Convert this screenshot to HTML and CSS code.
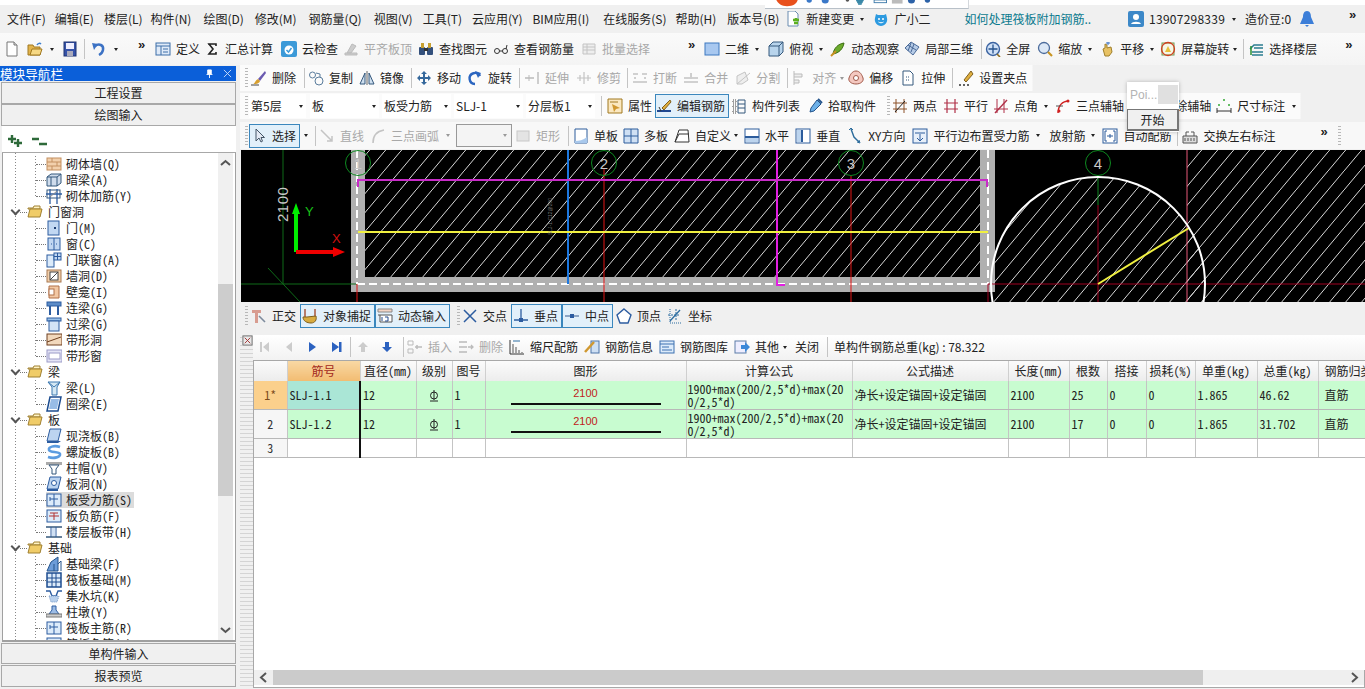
FILE: index.html
```html
<!DOCTYPE html>
<html lang="zh-CN">
<head>
<meta charset="utf-8">
<title>钢筋算量</title>
<link rel="stylesheet" href="styles.css">
</head>
<body>
<svg class="defs" xmlns="http://www.w3.org/2000/svg">
<defs>
<pattern id="hatch" width="16" height="19" patternUnits="userSpaceOnUse"><path d="M-4 23.750L20 -4.750" stroke="#d8d8d8" stroke-width="1" fill="none"/></pattern>
<symbol id="doc" viewBox="0 0 16 16"><path d="M3 1h7l3 3v11H3z" fill="#fff" stroke="#777"/><path d="M10 1v3h3" fill="#ddd" stroke="#777"/></symbol>
<symbol id="open" viewBox="0 0 16 16"><path d="M1 4h5l1 2h6v8H1z" fill="#e2b44c" stroke="#a07820"/><path d="M3 14l2-6h10l-2 6z" fill="#f6d884" stroke="#a07820"/><path d="M10 4c1-2 3-2 4-1" stroke="#3c7fd0" fill="none" stroke-width="1.500"/></symbol>
<symbol id="save" viewBox="0 0 16 16"><rect x="2" y="1" width="12" height="14" fill="#3552a8" stroke="#1e3270"/><rect x="4" y="2" width="8" height="6" fill="#eef"/><rect x="5" y="10" width="6" height="5" fill="#aab"/></symbol>
<symbol id="undo" viewBox="0 0 16 16"><path d="M4 5c4-3 9-1 8 4-.5 2.500-2 4-4 5" fill="none" stroke="#3c72c4" stroke-width="2.500"/><path d="M1 2l6 1-4 6z" fill="#3c72c4"/></symbol>
<symbol id="def" viewBox="0 0 16 16"><rect x="1" y="2" width="14" height="12" fill="#dfeaf8" stroke="#3c6ea8"/><path d="M1 5h14M6 5v9M8 8h5M8 11h5" stroke="#3c6ea8"/></symbol>
<symbol id="sigma" viewBox="0 0 16 16"><path d="M4 3h8v2M12 3H5l4 5-4 5h7v-2" fill="none" stroke="#222" stroke-width="1.600"/></symbol>
<symbol id="cloud" viewBox="0 0 16 16"><rect x="0" y="0" width="16" height="16" rx="2" fill="#3c9ad8"/><circle cx="8" cy="9" r="4.500" fill="#fff"/><path d="M5.500 9l2 2 3-4" stroke="#3c9ad8" fill="none" stroke-width="1.500"/></symbol>
<symbol id="align" viewBox="0 0 16 16"><path d="M2 14h12v-2H2zM4 12l5-9 4 2-5 7z" fill="#ccc" stroke="#bbb"/></symbol>
<symbol id="binoc" viewBox="0 0 16 16"><rect x="1" y="6" width="6" height="8" rx="1" fill="#33507c"/><rect x="9" y="6" width="6" height="8" rx="1" fill="#33507c"/><rect x="3" y="2" width="3" height="5" fill="#c8a030"/><rect x="10" y="2" width="3" height="5" fill="#c8a030"/><rect x="6" y="7" width="4" height="3" fill="#333"/></symbol>
<symbol id="glasses" viewBox="0 0 16 16"><circle cx="4" cy="10" r="2.500" fill="none" stroke="#333"/><circle cx="12" cy="10" r="2.500" fill="none" stroke="#333"/><path d="M6.500 10h3M13 8l1-4" stroke="#333"/></symbol>
<symbol id="batch" viewBox="0 0 16 16"><path d="M2 3h12v10H2zM2 6h12M2 9h12M6 3v10" fill="#eee" stroke="#c4c4c4"/></symbol>
<symbol id="d2" viewBox="0 0 16 16"><rect x="1" y="2" width="14" height="12" fill="#a8c8f0" stroke="#3c78c0"/></symbol>
<symbol id="d3" viewBox="0 0 16 16"><path d="M1 5l4-4h10v10l-4 4H1z" fill="#b8d4ec" stroke="#35587c"/><path d="M1 5h10v10M11 5l4-4" fill="none" stroke="#35587c"/></symbol>
<symbol id="orbit" viewBox="0 0 16 16"><path d="M3 13c1-6 5-10 11-11-1 6-5 10-11 11z" fill="#6cab2c" stroke="#3a6c10"/><path d="M1 15l5-5" stroke="#c89020" stroke-width="2"/></symbol>
<symbol id="local3" viewBox="0 0 16 16"><path d="M1 7l6-6 8 5-6 8z" fill="#b6cbe6" stroke="#4a6a98"/><path d="M4 4l8 5M7 2l-3 8M10 3l-3 8" stroke="#4a6a98"/></symbol>
<symbol id="full" viewBox="0 0 16 16"><circle cx="8" cy="8" r="6.500" fill="#cfe0f6" stroke="#3a62a0" stroke-width="1.400"/><path d="M8 3.500v9M3.500 8h9" stroke="#24508c" stroke-width="1.300"/><path d="M12 13l3 3" stroke="#8c6d20" stroke-width="1.600"/></symbol>
<symbol id="zoom" viewBox="0 0 16 16"><circle cx="7" cy="7" r="5.500" fill="#dce8f6" stroke="#4c6c9c" stroke-width="1.300"/><path d="M11 11l4 4" stroke="#c89420" stroke-width="2.200"/></symbol>
<symbol id="hand" viewBox="0 0 16 16"><path d="M4 8l2-1V3l2 1v3l4-1 1 5-3 4H6z" fill="#e8c264" stroke="#a0802c"/><path d="M9 1v3M7 2h4" stroke="#3c72c4"/></symbol>
<symbol id="rot" viewBox="0 0 16 16"><rect x="2" y="2" width="12" height="12" fill="#f6f6e6" stroke="#6c9c50"/><circle cx="8" cy="8" r="6.500" fill="none" stroke="#d04020" stroke-width="1.300"/><path d="M5 11l3-6 3 6z" fill="#e8c03c"/></symbol>
<symbol id="floors" viewBox="0 0 16 16"><path d="M2 8l4-4h9M4 11h11M4 14h11M6 7h9" stroke="#2a7c90" stroke-width="1.500" fill="none"/><path d="M3 5v9" stroke="#2a9030" stroke-width="1.500"/></symbol>
<symbol id="newchg" viewBox="0 0 16 16"><path d="M3 0h7l3 3v12H3z" fill="#fff" stroke="#6a8cb0"/><path d="M11 7v3M8 9h6M9 12h4" stroke="#5bb020" stroke-width="2.600"/></symbol>
<symbol id="robot" viewBox="0 0 16 16"><path d="M3 3l2 1h6l2-1 1 4c1 4-2 8-6 8S1 11 2 7z" fill="#2c9ae0"/><circle cx="6" cy="8" r="1" fill="#fff"/><circle cx="10" cy="8" r="1" fill="#fff"/><path d="M5.500 11c1 1 4 1 5 0" stroke="#fff" fill="none"/></symbol>
<symbol id="user" viewBox="0 0 16 16"><rect x="0" y="0" width="16" height="16" rx="2" fill="#3c88c8"/><circle cx="8" cy="6" r="3" fill="#fff"/><path d="M3 13c1-3 9-3 10 0z" fill="#fff"/></symbol>
<symbol id="bell" viewBox="0 0 16 16"><path d="M8 0c3 0 4 3 4 6l3 7H1l3-7c0-3 1-6 4-6z" fill="#3c7ed8"/><path d="M6 14h4l-2 2z" fill="#3c7ed8"/></symbol>
<symbol id="brush" viewBox="0 0 16 16"><path d="M14 1L7 9l2 2 6-8z" fill="#6a5ab0"/><path d="M2 14c2 0 2-4 5-5l2 2c-1 3-4 3-7 3z" fill="#d8a030"/><path d="M0 15h8" stroke="#444"/></symbol>
<symbol id="copy" viewBox="0 0 16 16"><circle cx="4.500" cy="5" r="3" fill="none" stroke="#5a7c9c"/><circle cx="11" cy="11" r="4" fill="none" stroke="#5a7c9c"/><path d="M8 3l4 1 0 3" fill="none" stroke="#5a7c9c"/></symbol>
<symbol id="mirror" viewBox="0 0 16 16"><path d="M8 1v14" stroke="#666"/><path d="M6 3v11H1zM10 3v11h5z" fill="#cfe0f0" stroke="#35587c"/></symbol>
<symbol id="move" viewBox="0 0 16 16"><path d="M8 1l3 3H9v3h3V5l3 3-3 3V9H9v3h2l-3 3-3-3h2V9H4v2L1 8l3-3v2h3V4H5z" fill="#35689c"/></symbol>
<symbol id="rotate" viewBox="0 0 16 16"><path d="M8 14a5.500 5.500 0 1 1 5-8" fill="none" stroke="#2c66c0" stroke-width="2.400"/><path d="M8 1l6 2-3 5z" fill="#2c66c0"/></symbol>
<symbol id="extend" viewBox="0 0 16 16"><path d="M14 2v12M1 8h9" stroke="#bbb" stroke-width="1.400"/><path d="M5 5v6" stroke="#bbb"/></symbol>
<symbol id="trim" viewBox="0 0 16 16"><path d="M8 2v12M1 8h14M4 5v6M12 5v6" stroke="#c4c4c4" stroke-width="1.200"/></symbol>
<symbol id="brk" viewBox="0 0 16 16"><path d="M1 4h5M10 4h5M1 12h14M3 7v2M13 7v2" stroke="#c4c4c4" stroke-width="1.600"/></symbol>
<symbol id="merge" viewBox="0 0 16 16"><path d="M1 12h14M1 8h6M9 8h6M8 3v6" stroke="#c4c4c4" stroke-width="1.600"/></symbol>
<symbol id="split" viewBox="0 0 16 16"><path d="M2 14V6l8-4 3 8-6 4z" fill="#eee" stroke="#c4c4c4"/><path d="M2 14L15 3" stroke="#c4c4c4"/></symbol>
<symbol id="alg" viewBox="0 0 16 16"><path d="M3 1v14M3 4h8v3H3M3 10h5v3H3" stroke="#bbb" fill="#eee"/></symbol>
<symbol id="offset" viewBox="0 0 16 16"><path d="M8 1c4 0 6 4 7 7s-2 6-7 6-8-3-7-6 3-7 7-7z" fill="#f4c8c0" stroke="#a05848"/><circle cx="8" cy="8" r="2.500" fill="#fff" stroke="#a05848"/></symbol>
<symbol id="stretch" viewBox="0 0 16 16"><path d="M3 1h7l3 3v11H3z" fill="#fff" stroke="#35587c"/><path d="M6 7h4M6 10h4" stroke="#35587c" stroke-dasharray="1 1"/></symbol>
<symbol id="grip" viewBox="0 0 16 16"><path d="M1 15h2M5 15h2M9 15h2" stroke="#333" stroke-width="1.500"/><path d="M13 1L6 10l2 2 7-8z" fill="#e0b040" stroke="#806020"/></symbol>
<symbol id="props" viewBox="0 0 16 16"><path d="M1 1h14v14H1z" fill="#fbe8c0" stroke="#a07820"/><path d="M5 6l8 4-4 1-2 3z" fill="#d09830"/><path d="M3 4h8" stroke="#a07820"/></symbol>
<symbol id="pen" viewBox="0 0 16 16"><path d="M14 2L6 10l2 2 7-8z" fill="#e0b040" stroke="#806020"/><path d="M1 13h14" stroke="#204890" stroke-width="2"/><path d="M3 9l2 4" stroke="#333"/></symbol>
<symbol id="list" viewBox="0 0 16 16"><path d="M2 2h3v3H2zM2 7h3v3H2zM2 12h3v3H2z" fill="none" stroke="#444" stroke-dasharray="1 1"/><path d="M7 2h7v13H7z" fill="none" stroke="#35587c"/><path d="M7 6h7M7 10h7" stroke="#35587c"/></symbol>
<symbol id="pick" viewBox="0 0 16 16"><path d="M10 2l4 4-7 7-4 1 1-4z" fill="#6cb0e8" stroke="#24548c"/><path d="M11 1l4 4" stroke="#24548c" stroke-width="2"/></symbol>
<symbol id="twopt" viewBox="0 0 16 16"><path d="M4 1v14M12 1v14M1 5h14M1 11h14" stroke="#8c5028"/><path d="M3 14L13 3" stroke="#222"/></symbol>
<symbol id="para" viewBox="0 0 16 16"><path d="M4 1v14M12 1v14M1 5h14M1 11h14" stroke="#b03048" stroke-width="1.200"/></symbol>
<symbol id="angle" viewBox="0 0 16 16"><path d="M4 1v14M11 1v14M1 11h14" stroke="#b03048"/><path d="M2 15L14 2" stroke="#b03048" stroke-width="1.400"/></symbol>
<symbol id="arc3" viewBox="0 0 16 16"><path d="M3 15C3 8 7 3 14 3" fill="none" stroke="#d02020" stroke-width="1.400"/><circle cx="4" cy="13" r="1.500" fill="#d02020"/><circle cx="13" cy="3" r="1.500" fill="#d02020"/><path d="M1 8h7" stroke="#555"/></symbol>
<symbol id="del" viewBox="0 0 16 16"><path d="M4 3v10M12 3v10" stroke="#b03048"/><path d="M2 8h12" stroke="#b03048"/></symbol>
<symbol id="dim" viewBox="0 0 16 16"><path d="M1 10v5M15 10v5M1 13h14" stroke="#333"/><circle cx="3" cy="7" r="1" fill="#3a3"/><circle cx="8" cy="2" r="1" fill="#3a3"/><circle cx="13" cy="7" r="1" fill="#3a3"/></symbol>
<symbol id="arrow" viewBox="0 0 16 16"><path d="M5 1v12l3-3 2 4 1.500-.8L10 9.500h3.500z" fill="#e4eaf4" stroke="#456"/></symbol>
<symbol id="line" viewBox="0 0 16 16"><path d="M2 2l11 11M13 8v5H8" stroke="#c4c4c4" stroke-width="1.500" fill="none"/></symbol>
<symbol id="arc" viewBox="0 0 16 16"><path d="M3 15C3 7 8 3 14 2" stroke="#c4c4c4" stroke-width="1.600" fill="none"/></symbol>
<symbol id="rect" viewBox="0 0 16 16"><rect x="2" y="3" width="12" height="10" fill="#e4e4e4" stroke="#c8c8c8"/></symbol>
<symbol id="single" viewBox="0 0 16 16"><path d="M2 1h12v14H2z" fill="#fff" stroke="#2c5c9c"/><path d="M2 15h12V9C10 12 6 13 2 13z" fill="#a8c8ec"/></symbol>
<symbol id="multi" viewBox="0 0 16 16"><path d="M1 1h14v14H1z" fill="#cfe0f4" stroke="#2c5c9c"/><path d="M8 1v14M1 8h14" stroke="#2c5c9c"/></symbol>
<symbol id="custom" viewBox="0 0 16 16"><path d="M1 14L5 2h9l1 12z" fill="#fff" stroke="#333"/><path d="M1 14L5 6h10" fill="none" stroke="#333"/></symbol>
<symbol id="horiz" viewBox="0 0 16 16"><rect x="1" y="1" width="14" height="14" fill="#fff" stroke="#2c5c9c"/><rect x="1" y="8" width="14" height="2" fill="#2c5c9c"/><rect x="2" y="10" width="12" height="4" fill="#bcd4ee"/></symbol>
<symbol id="vert" viewBox="0 0 16 16"><rect x="1" y="1" width="14" height="14" fill="#fff" stroke="#2c5c9c"/><rect x="2" y="2" width="4" height="12" fill="#bcd4ee"/><rect x="6" y="2" width="2" height="12" fill="#2c5c9c"/></symbol>
<symbol id="xy" viewBox="0 0 16 16"><path d="M4 1l3 8 5 5" stroke="#2c6c9c" fill="none" stroke-width="1.400"/><path d="M2 2l2-2 2 2M10 14l3 1-1-3" stroke="#2c6c9c" fill="none"/></symbol>
<symbol id="paredge" viewBox="0 0 16 16"><rect x="1" y="1" width="14" height="14" fill="#e8f0fa" stroke="#2c5c9c"/><path d="M3 5h10M8 6v7M5 10l3 3 3-3" stroke="#2c5c9c" fill="none"/></symbol>
<symbol id="auto" viewBox="0 0 16 16"><rect x="1" y="1" width="14" height="14" fill="#fff" stroke="#2c5c9c"/><path d="M5 3H3v10h2M11 3h2v10h-2M5 8h6M8 6v4" stroke="#2c5c9c" fill="none"/></symbol>
<symbol id="swap" viewBox="0 0 16 16"><path d="M1 8h14v7H1z" fill="#ddd" stroke="#555"/><path d="M4 8V4h3M12 8V4H9M3 10v3M6 10v3M9 10v3M12 10v3" stroke="#555" fill="none"/></symbol>
<symbol id="ortho" viewBox="0 0 16 16"><path d="M1 2h9v3H7v10H4V5H1z" fill="#d89c90"/><path d="M8 8l6 6" stroke="#7c8a9c" stroke-width="1.600"/></symbol>
<symbol id="snap" viewBox="0 0 16 16"><path d="M3 1v9M13 1v9" stroke="#a04020" stroke-width="1.300"/><path d="M1 9c0 4 4 6 8 6s6-3 5-7l-9 1z" fill="#d8ac40" stroke="#806020"/></symbol>
<symbol id="dyn" viewBox="0 0 16 16"><path d="M1 1h14v3H1z" fill="#f4d4c4" stroke="#888"/><path d="M1 7h14M3 7v7h12V7" fill="#fff" stroke="#555"/><path d="M5 9v4M8 9h3v4H8" stroke="#244a8c" fill="none"/></symbol>
<symbol id="cross" viewBox="0 0 16 16"><path d="M2 2l12 12M14 2L2 14" stroke="#2c5ca0" stroke-width="1.500"/></symbol>
<symbol id="perp" viewBox="0 0 16 16"><path d="M1 12h14M8 1v11" stroke="#2c5ca0" stroke-width="1.300"/><rect x="6" y="10" width="4" height="4" fill="#2c5ca0"/></symbol>
<symbol id="mid" viewBox="0 0 16 16"><path d="M1 8h14" stroke="#5c7ca8" stroke-width="1.300"/><rect x="6" y="6" width="4" height="4" fill="#2c5ca0"/></symbol>
<symbol id="top" viewBox="0 0 16 16"><path d="M8 1l7 6-3 8H4L1 7z" fill="#fff" stroke="#2c5ca0" stroke-width="1.400"/></symbol>
<symbol id="coord" viewBox="0 0 16 16"><path d="M3 1v14h12" stroke="#2c6ca0" stroke-dasharray="1 1" fill="none"/><path d="M3 13L13 2" stroke="#2c6ca0" stroke-width="1.300"/><path d="M1 7h12M9 1v12" stroke="#2c6ca0" stroke-dasharray="2 1" fill="none"/></symbol>
<symbol id="ins" viewBox="0 0 16 16"><path d="M1 2h5v4H1zM1 10h5v4H1z" fill="none" stroke="#bbb"/><path d="M8 8h7M10 6v4" stroke="#bbb" stroke-width="1.500"/></symbol>
<symbol id="rm" viewBox="0 0 16 16"><path d="M1 3h8M1 8h8M1 13h8M10 8h5M13 6l2 2-2 2" stroke="#bbb" fill="none" stroke-width="1.300"/></symbol>
<symbol id="scale" viewBox="0 0 16 16"><path d="M1 1v14h14" stroke="#333" fill="none"/><path d="M4 14V5M7 14V8M10 14v-3M13 14v-1" stroke="#555"/><path d="M4 2h7" stroke="#2c6ca0"/></symbol>
<symbol id="info" viewBox="0 0 16 16"><rect x="7" y="2" width="8" height="12" fill="#cfe0f4" stroke="#4c74a8"/><path d="M1 13L10 3" stroke="#d09830" stroke-width="2.500"/></symbol>
<symbol id="lib" viewBox="0 0 16 16"><rect x="1" y="2" width="14" height="12" fill="#dcebfa" stroke="#3c70b0"/><path d="M1 5h14M3 8h7M3 11h10" stroke="#3c70b0"/></symbol>
<symbol id="other" viewBox="0 0 16 16"><rect x="1" y="2" width="11" height="12" fill="#eef" stroke="#5c7ca8"/><path d="M7 6h4V3l5 5-5 5v-3H7z" fill="#3c88d8"/></symbol>
<symbol id="folder" viewBox="0 0 16 16"><path d="M1 4h5l1-2h6v3H1z" fill="#fff3c4" stroke="#a08030"/><path d="M1 13l2-8h12l-2 8z" fill="#f0cc68" stroke="#a08030"/></symbol>
<symbol id="t-brick" viewBox="0 0 16 16"><rect x="1" y="2" width="14" height="12" fill="#f2d0ac" stroke="#c49060"/><path d="M1 6h14M1 10h14M6 2v4M11 6v4M6 10v4" stroke="#c49060"/></symbol>
<symbol id="t-hide" viewBox="0 0 16 16"><path d="M1 5l4-3h10v9l-4 3H1z" fill="#cfdcec" stroke="#35587c"/><path d="M1 5h10v9M11 5l4-3M5 5v9" fill="none" stroke="#35587c"/></symbol>
<symbol id="t-wrebar" viewBox="0 0 16 16"><rect x="1" y="2" width="13" height="8" fill="#fff" stroke="#35587c"/><path d="M0 6h16M4 1v15M11 1v15" stroke="#2c5ca0" stroke-width="1.300"/><path d="M4 9l7-6" stroke="#888"/></symbol>
<symbol id="t-door" viewBox="0 0 16 16"><rect x="2" y="1" width="11" height="14" fill="#c2d8f2" stroke="#2c5ca0"/><rect x="8" y="7" width="2" height="2" fill="#1c3c70"/></symbol>
<symbol id="t-win" viewBox="0 0 16 16"><rect x="2" y="2" width="12" height="12" fill="#c2d8f2" stroke="#2c5ca0"/><path d="M8 2v12M5 8h1M10 8h1" stroke="#2c5ca0"/></symbol>
<symbol id="t-dw" viewBox="0 0 16 16"><rect x="1" y="3" width="7" height="12" fill="#dcebfa" stroke="#2c5ca0"/><rect x="8" y="1" width="7" height="7" fill="#c2d8f2" stroke="#2c5ca0"/><path d="M11.500 1v7M8 4.500h7" stroke="#2c5ca0"/></symbol>
<symbol id="t-hole" viewBox="0 0 16 16"><rect x="1" y="2" width="14" height="12" fill="#f2d0ac" stroke="#a87850"/><rect x="4" y="4" width="8" height="8" fill="#fff" stroke="#444"/><path d="M4 12l8-8" stroke="#444"/></symbol>
<symbol id="t-niche" viewBox="0 0 16 16"><path d="M3 2h10v12H3z" fill="#f2c8a4" stroke="#b07048"/><rect x="3" y="5" width="5" height="6" fill="#fff" stroke="#b07048"/></symbol>
<symbol id="t-link" viewBox="0 0 16 16"><rect x="1" y="2" width="14" height="4" fill="#5c8cc8" stroke="#2c5ca0"/><path d="M4 6v9M12 6v9" stroke="#2c5ca0" stroke-width="2"/></symbol>
<symbol id="t-over" viewBox="0 0 16 16"><rect x="1" y="2" width="14" height="3" fill="#98c0e8" stroke="#2c5ca0"/><rect x="3" y="5" width="10" height="10" fill="#d4e4f6" stroke="#2c5ca0"/></symbol>
<symbol id="t-band" viewBox="0 0 16 16"><rect x="1" y="2" width="15" height="11" fill="#f2d8bc" stroke="#704020"/><path d="M1 10l14-5" stroke="#704020"/></symbol>
<symbol id="t-bwin" viewBox="0 0 16 16"><rect x="1" y="2" width="15" height="12" fill="#e4e4f6" stroke="#9c9cc8"/><rect x="3" y="5" width="11" height="6" fill="#fff" stroke="#9c9cc8"/></symbol>
<symbol id="t-beam" viewBox="0 0 16 16"><path d="M2 2h12l-3 5v8H6V7z" fill="#d4e8f4" stroke="#3c78b0"/><path d="M2 2l6 5 6-5" fill="none" stroke="#3c78b0"/></symbol>
<symbol id="t-ring" viewBox="0 0 16 16"><path d="M4 1h11l-3 14H1z" fill="#fff" stroke="#1c4c90" stroke-width="1.500"/><path d="M5 3h8l-2 10H3z" fill="#98bce6"/></symbol>
<symbol id="t-slab" viewBox="0 0 16 16"><path d="M4 1h11l-3 12H1z" fill="#bcd4f0" stroke="#2c5ca0"/><path d="M1 13v2h11l3-2" fill="#2c5ca0"/></symbol>
<symbol id="t-spiral" viewBox="0 0 16 16"><path d="M14 3C8 1 2 3 3 6s10 1 11 4-6 5-12 3" fill="none" stroke="#5c9ce0" stroke-width="2.600"/></symbol>
<symbol id="t-cap" viewBox="0 0 16 16"><rect x="0" y="2" width="16" height="3" fill="#aaa"/><path d="M3 5h10l-3 4v5H6V9z" fill="#fff" stroke="#35587c"/></symbol>
<symbol id="t-shole" viewBox="0 0 16 16"><path d="M4 1h11l-3 12H1z" fill="#bcd4f0" stroke="#2c5ca0"/><circle cx="8" cy="7" r="2.500" fill="#fff" stroke="#2c5ca0"/><path d="M1 14h11" stroke="#2c5ca0" stroke-width="2"/></symbol>
<symbol id="t-rebar" viewBox="0 0 16 16"><rect x="1" y="2" width="14" height="12" fill="#dcebfa" stroke="#2c5ca0"/><path d="M8 2v12M4 7h8M4 5v4" stroke="#2c5ca0"/></symbol>
<symbol id="t-neg" viewBox="0 0 16 16"><rect x="1" y="2" width="14" height="12" fill="#dcebfa" stroke="#2c5ca0"/><path d="M3 8h10M8 5v7M4 5h8" stroke="#b03030"/></symbol>
<symbol id="t-fband" viewBox="0 0 16 16"><path d="M0 3h16M0 13h16" stroke="#35587c" stroke-width="1.500"/><path d="M5 3v10M10 3v10" stroke="#2c5ca0"/><rect x="6" y="4" width="3" height="8" fill="#cfe0f4"/></symbol>
<symbol id="t-fbeam" viewBox="0 0 16 16"><path d="M1 15l4-9 7-5v14z" fill="#6c9cd8" stroke="#24548c"/><path d="M8 15V8M12 8l3-3v10" stroke="#24548c" fill="none"/></symbol>
<symbol id="t-raft" viewBox="0 0 16 16"><rect x="1" y="1" width="14" height="14" fill="#dcebfa" stroke="#1c4c90" stroke-width="1.500"/><path d="M1 6h14M1 10h14M6 1v14M10 1v14" stroke="#1c4c90"/></symbol>
<symbol id="t-sump" viewBox="0 0 16 16"><path d="M0 3h4l2 5h4l2-5h4" fill="none" stroke="#2c5ca0" stroke-width="1.400"/><path d="M3 8h10l-2 6H5z" fill="#b8d0ec" stroke="#7c9cc8" stroke-dasharray="1 1"/></symbol>
<symbol id="t-pier" viewBox="0 0 16 16"><path d="M6 2h4v4l3 4H3l3-4z" fill="#9cbce6" stroke="#2c5ca0"/><rect x="0" y="10" width="16" height="3" fill="#ccc" stroke="#777"/></symbol>
</defs>
</svg>

<div class="app">
  <div class="topstrip"></div>

  <div class="menubar">
    <span>文件(F)</span><span class="m9">编辑(E)</span><span class="m10">楼层(L)</span><span class="m8">构件(N)</span><span class="m12">绘图(D)</span><span class="m11">修改(M)</span><span class="m12">钢筋量(Q)</span><span class="m12">视图(V)</span><span class="m10">工具(T)</span><span class="m10">云应用(Y)</span><span class="m10">BIM应用(I)</span><span class="m14">在线服务(S)</span><span class="m9">帮助(H)</span><span class="m11">版本号(B)</span>
    <span class="it m6"><svg class="i"><use href="#newchg"/></svg>新建变更</span><i class="arr m6"></i>
    <span class="it m9"><svg class="i"><use href="#robot"/></svg>广小二</span>
    <span class="news">如何处理筏板附加钢筋..</span>
    <span class="it phone"><svg class="i"><use href="#user"/></svg>13907298339</span><i class="arr m7"></i>
    <span class="m9">造价豆:0</span>
    <svg class="i m8"><use href="#bell"/></svg>
    <b class="more m34">»</b>
  </div>

  <div class="tb tb-main">
    <svg class="i"><use href="#doc"/></svg>
    <svg class="i m7"><use href="#open"/></svg><i class="arr m7"></i>
    <svg class="i m8"><use href="#save"/></svg><i class="sep m6"></i>
    <svg class="i m6"><use href="#undo"/></svg><i class="arr m7"></i>
    <b class="more m20">»</b>
    <span class="it m9"><svg class="i"><use href="#def"/></svg>定义</span>
    <span class="it m4"><svg class="i"><use href="#sigma"/></svg>汇总计算</span>
    <span class="it m8"><svg class="i"><use href="#cloud"/></svg>云检查</span>
    <span class="it off m5"><svg class="i"><use href="#align"/></svg>平齐板顶</span>
    <span class="it m6"><svg class="i"><use href="#binoc"/></svg>查找图元</span>
    <span class="it m6"><svg class="i"><use href="#glasses"/></svg>查看钢筋量</span>
    <span class="it off m7"><svg class="i"><use href="#batch"/></svg>批量选择</span>
    <b class="more m38">»</b>
    <span class="it m8"><svg class="i"><use href="#d2"/></svg>二维</span><i class="arr m6"></i>
    <span class="it m9"><svg class="i"><use href="#d3"/></svg>俯视</span><i class="arr m6"></i>
    <span class="it m7"><svg class="i"><use href="#orbit"/></svg>动态观察</span>
    <span class="it m5"><svg class="i"><use href="#local3"/></svg>局部三维</span><i class="sep m8"></i>
    <span class="it m3"><svg class="i"><use href="#full"/></svg>全屏</span>
    <span class="it m7"><svg class="i"><use href="#zoom"/></svg>缩放</span><i class="arr m6"></i>
    <span class="it m7"><svg class="i"><use href="#hand"/></svg>平移</span><i class="arr m6"></i>
    <span class="it m6"><svg class="i"><use href="#rot"/></svg>屏幕旋转</span><i class="arr m4"></i><i class="sep m6"></i>
    <span class="it m4"><svg class="i"><use href="#floors"/></svg>选择楼层</span>
    <b class="more m28">»</b>
  </div>

  <div class="work">
    <aside class="side">
      <div class="side-head"><span>模块导航栏</span><span class="side-ctl">
        <svg class="pin" viewBox="0 0 10 10"><path d="M3 1h4v4l1 1H2l1-1zM5 6v4" fill="#fff" stroke="#fff"/></svg>
        <svg class="pin" viewBox="0 0 10 10"><path d="M1 1l8 8M9 1l-8 8" stroke="#cfe0fa"/></svg></span></div>
      <div class="side-btn">工程设置</div>
      <div class="side-btn">绘图输入</div>
      <div class="side-tools">
        <svg class="exp" viewBox="0 0 16 14"><path d="M1 5h8M5 1v8M7 9h8M11 5v8" stroke="#2e6a3a" stroke-width="2.400"/></svg>
        <svg class="exp" viewBox="0 0 16 14"><path d="M1 5h7M8 10h8" stroke="#2e6a3a" stroke-width="2.400"/></svg>
      </div>
      <div class="tree-wrap">
        <div class="tree">
          <div class="kids">
            <div class="row"><span class="tick"></span><svg class="i"><use href="#t-brick"/></svg><span class="lb">砌体墙(Q)</span></div>
            <div class="row"><span class="tick"></span><svg class="i"><use href="#t-hide"/></svg><span class="lb">暗梁(A)</span></div>
            <div class="row"><span class="tick"></span><svg class="i"><use href="#t-wrebar"/></svg><span class="lb">砌体加筋(Y)</span></div>
          </div>
          <div class="row fold"><i class="chev"></i><span class="tick short"></span><svg class="i"><use href="#folder"/></svg><span class="lb">门窗洞</span></div>
          <div class="kids">
            <div class="row"><span class="tick"></span><svg class="i"><use href="#t-door"/></svg><span class="lb">门(M)</span></div>
            <div class="row"><span class="tick"></span><svg class="i"><use href="#t-win"/></svg><span class="lb">窗(C)</span></div>
            <div class="row"><span class="tick"></span><svg class="i"><use href="#t-dw"/></svg><span class="lb">门联窗(A)</span></div>
            <div class="row"><span class="tick"></span><svg class="i"><use href="#t-hole"/></svg><span class="lb">墙洞(D)</span></div>
            <div class="row"><span class="tick"></span><svg class="i"><use href="#t-niche"/></svg><span class="lb">壁龛(I)</span></div>
            <div class="row"><span class="tick"></span><svg class="i"><use href="#t-link"/></svg><span class="lb">连梁(G)</span></div>
            <div class="row"><span class="tick"></span><svg class="i"><use href="#t-over"/></svg><span class="lb">过梁(G)</span></div>
            <div class="row"><span class="tick"></span><svg class="i"><use href="#t-band"/></svg><span class="lb">带形洞</span></div>
            <div class="row"><span class="tick"></span><svg class="i"><use href="#t-bwin"/></svg><span class="lb">带形窗</span></div>
          </div>
          <div class="row fold"><i class="chev"></i><span class="tick short"></span><svg class="i"><use href="#folder"/></svg><span class="lb">梁</span></div>
          <div class="kids">
            <div class="row"><span class="tick"></span><svg class="i"><use href="#t-beam"/></svg><span class="lb">梁(L)</span></div>
            <div class="row"><span class="tick"></span><svg class="i"><use href="#t-ring"/></svg><span class="lb">圈梁(E)</span></div>
          </div>
          <div class="row fold"><i class="chev"></i><span class="tick short"></span><svg class="i"><use href="#folder"/></svg><span class="lb">板</span></div>
          <div class="kids">
            <div class="row"><span class="tick"></span><svg class="i"><use href="#t-slab"/></svg><span class="lb">现浇板(B)</span></div>
            <div class="row"><span class="tick"></span><svg class="i"><use href="#t-spiral"/></svg><span class="lb">螺旋板(B)</span></div>
            <div class="row"><span class="tick"></span><svg class="i"><use href="#t-cap"/></svg><span class="lb">柱帽(V)</span></div>
            <div class="row"><span class="tick"></span><svg class="i"><use href="#t-shole"/></svg><span class="lb">板洞(N)</span></div>
            <div class="row"><span class="tick"></span><span class="sel"><svg class="i"><use href="#t-rebar"/></svg><span class="lb">板受力筋(S)</span></span></div>
            <div class="row"><span class="tick"></span><svg class="i"><use href="#t-neg"/></svg><span class="lb">板负筋(F)</span></div>
            <div class="row"><span class="tick"></span><svg class="i"><use href="#t-fband"/></svg><span class="lb">楼层板带(H)</span></div>
          </div>
          <div class="row fold"><i class="chev"></i><span class="tick short"></span><svg class="i"><use href="#folder"/></svg><span class="lb">基础</span></div>
          <div class="kids">
            <div class="row"><span class="tick"></span><svg class="i"><use href="#t-fbeam"/></svg><span class="lb">基础梁(F)</span></div>
            <div class="row"><span class="tick"></span><svg class="i"><use href="#t-raft"/></svg><span class="lb">筏板基础(M)</span></div>
            <div class="row"><span class="tick"></span><svg class="i"><use href="#t-sump"/></svg><span class="lb">集水坑(K)</span></div>
            <div class="row"><span class="tick"></span><svg class="i"><use href="#t-pier"/></svg><span class="lb">柱墩(Y)</span></div>
            <div class="row"><span class="tick"></span><svg class="i"><use href="#t-rebar"/></svg><span class="lb">筏板主筋(R)</span></div>
            <div class="row"><span class="tick"></span><svg class="i"><use href="#t-neg"/></svg><span class="lb">筏板负筋(X)</span></div>
          </div>
        </div>
        <div class="vscroll">
          <svg class="sc-btn" viewBox="0 0 15 15"><path d="M3 9l4.500-4 4.500 4" fill="none" stroke="#555" stroke-width="2"/></svg>
          <div class="vtrack"><div class="vthumb"></div></div>
          <svg class="sc-btn" viewBox="0 0 15 15"><path d="M3 6l4.500 4 4.500-4" fill="none" stroke="#555" stroke-width="2"/></svg>
        </div>
      </div>
      <div class="side-btn foot">单构件输入</div>
      <div class="side-btn foot2">报表预览</div>
    </aside>

    <main class="content">
      <div class="tb tb-edit">
        <i class="grip"></i>
        <span class="it m3"><svg class="i"><use href="#brush"/></svg>删除</span><i class="sep m8"></i>
        <span class="it m3"><svg class="i"><use href="#copy"/></svg>复制</span>
        <span class="it m6"><svg class="i"><use href="#mirror"/></svg>镜像</span><i class="sep m7"></i>
        <span class="it m4"><svg class="i"><use href="#move"/></svg>移动</span>
        <span class="it m6"><svg class="i"><use href="#rotate"/></svg>旋转</span><i class="sep m7"></i>
        <span class="it off m4"><svg class="i"><use href="#extend"/></svg>延伸</span>
        <span class="it off m7"><svg class="i"><use href="#trim"/></svg>修剪</span><i class="sep m6"></i>
        <span class="it off m4"><svg class="i"><use href="#brk"/></svg>打断</span>
        <span class="it off m6"><svg class="i"><use href="#merge"/></svg>合并</span>
        <span class="it off m7"><svg class="i"><use href="#split"/></svg>分割</span><i class="sep m7"></i>
        <span class="it off m3"><svg class="i"><use href="#alg"/></svg>对齐</span><i class="arr dim m4"></i>
        <span class="it m4"><svg class="i"><use href="#offset"/></svg>偏移</span>
        <span class="it m7"><svg class="i"><use href="#stretch"/></svg>拉伸</span><i class="sep m7"></i>
        <span class="it m5"><svg class="i"><use href="#grip"/></svg>设置夹点</span>
      </div>

      <div class="tb tb-prop">
        <i class="grip"></i>
        <span class="sel-box w57 m1">第5层<i class="arr"></i></span>
        <span class="sel-box w69 m4">板<i class="arr"></i></span>
        <span class="sel-box w69 m3">板受力筋<i class="arr"></i></span>
        <span class="sel-box w69 m3">SLJ-1<i class="arr"></i></span>
        <span class="sel-box w69 m3">分层板1<i class="arr"></i></span><i class="sep m6"></i>
        <span class="it m5"><svg class="i"><use href="#props"/></svg>属性</span>
        <span class="it on m3"><svg class="i"><use href="#pen"/></svg>编辑钢筋</span>
        <span class="it m2"><svg class="i"><use href="#list"/></svg>构件列表</span>
        <span class="it m7"><svg class="i"><use href="#pick"/></svg>拾取构件</span>
        <i class="grip m11"></i>
        <span class="it m2"><svg class="i"><use href="#twopt"/></svg>两点</span>
        <span class="it m6"><svg class="i"><use href="#para"/></svg>平行</span>
        <span class="it m5"><svg class="i"><use href="#angle"/></svg>点角</span><i class="arr m6"></i>
        <span class="it m7"><svg class="i"><use href="#arc3"/></svg>三点辅轴</span>
        <span class="it m18"><svg class="i"><use href="#del"/></svg>删除辅轴</span>
        <span class="it m5"><svg class="i"><use href="#dim"/></svg>尺寸标注</span><i class="arr m7"></i>
      </div>

      <div class="tb tb-draw">
        <i class="grip"></i>
        <span class="it on wide m1"><svg class="i"><use href="#arrow"/></svg>选择</span><i class="arr m4"></i><i class="sep m7"></i>
        <span class="it off m3"><svg class="i"><use href="#line"/></svg>直线</span>
        <span class="it off m6"><svg class="i"><use href="#arc"/></svg>三点画弧</span><i class="arr dim m7"></i>
        <span class="combo m6"><i class="arr dim"></i></span>
        <span class="it off m3"><svg class="i"><use href="#rect"/></svg>矩形</span><i class="sep m8"></i>
        <span class="it m4"><svg class="i"><use href="#single"/></svg>单板</span>
        <span class="it m5"><svg class="i"><use href="#multi"/></svg>多板</span>
        <span class="it m6"><svg class="i"><use href="#custom"/></svg>自定义</span><i class="arr m3"></i>
        <span class="it m6"><svg class="i"><use href="#horiz"/></svg>水平</span>
        <span class="it m6"><svg class="i"><use href="#vert"/></svg>垂直</span>
        <span class="it m7"><svg class="i"><use href="#xy"/></svg>XY方向</span>
        <span class="it m7"><svg class="i"><use href="#paredge"/></svg>平行边布置受力筋</span><i class="arr m7"></i>
        <span class="m9">放射筋</span><i class="arr m6"></i>
        <span class="it m7"><svg class="i"><use href="#auto"/></svg>自动配筋</span><i class="sep m6"></i>
        <span class="it m4"><svg class="i"><use href="#swap"/></svg>交换左右标注</span>
        <b class="more m45">»</b><i class="grip m10"></i>
      </div>

      <svg class="cad" viewBox="241 150 1124 152" xmlns="http://www.w3.org/2000/svg">
        <defs>
          <clipPath id="circ"><circle cx="1098" cy="284" r="107"/></clipPath>
        </defs>
        <rect x="241" y="150" width="1124" height="152" fill="#000"/>
        <rect x="351" y="150" width="644" height="142" fill="#b0b0b0"/>
        <rect x="365" y="150" width="615" height="127" fill="#000"/>
        <rect x="365" y="150" width="615" height="127" fill="url(#hatch)"/>
        <rect x="991" y="170" width="214" height="132" fill="url(#hatch)" clip-path="url(#circ)"/>
        <rect x="1187" y="150" width="178" height="152" fill="url(#hatch)"/>
        <path d="M283 150V284M241 284H357M268 268L300 302" stroke="#0e6a18" fill="none"/>
        <path d="M1098 176V205" stroke="#0e8a20"/>
        <path d="M357 150V284M988 150V284M357 284H988" stroke="#fff" stroke-width="2" stroke-dasharray="8 4" fill="none"/>
        <path d="M357 284V302M604 168V302M851 176V302" stroke="#e01414" fill="none"/>
        <path d="M988 284V302M1098 205V302M988 284H1365" stroke="#a00020" fill="none"/>
        <path d="M1187 150V302" stroke="#e85878"/>
        <path d="M568 150V284" stroke="#1c78e0" stroke-width="2"/>
        <path d="M777 150V285H785" stroke="#e020e0" stroke-width="2" fill="none"/>
        <path d="M358 187V180H987V187" stroke="#c82cc8" stroke-width="2" fill="none"/>
        <path d="M358 232H988" stroke="#f0f040" stroke-width="2"/>
        <path d="M1098 284L1189 228" stroke="#f0f040" stroke-width="2"/>
        <circle cx="1098" cy="284" r="107" fill="none" stroke="#fff" stroke-width="2"/>
        <g fill="none" stroke="#0e8a20">
          <circle cx="358" cy="163" r="12.500"/><circle cx="604" cy="163" r="12.500"/><circle cx="851" cy="163" r="12.500"/><circle cx="1098" cy="163" r="12.500"/>
        </g>
        <g class="cad-num">
          <text x="358" y="168.500">1</text><text x="604" y="168.500">2</text><text x="851" y="168.500">3</text><text x="1098" y="168.500">4</text>
        </g>
        <text class="cad-dim" transform="translate(288 222) rotate(-90)">2100</text>
        <text class="cad-tiny" transform="translate(552 235) rotate(-90)">SLJ-1:C12@200</text>
        <path d="M296 252V212" stroke="#00ee00" stroke-width="4"/><path d="M292 214l4-11 4 11z" fill="#00ee00"/>
        <path d="M296 252H334" stroke="#f00000" stroke-width="4"/><path d="M333 247l12 5-12 5z" fill="#f00000"/>
        <text class="cad-y" x="305" y="216">Y</text>
        <text class="cad-x" x="332" y="243">X</text>
      </svg>

      <div class="tb tb-snap">
        <i class="grip"></i>
        <span class="it m3"><svg class="i"><use href="#ortho"/></svg>正交</span>
        <span class="it on wide m4"><svg class="i"><use href="#snap"/></svg>对象捕捉</span>
        <span class="it on wide"><svg class="i"><use href="#dyn"/></svg>动态输入</span>
        <i class="grip m7"></i>
        <span class="it m2"><svg class="i"><use href="#cross"/></svg>交点</span>
        <span class="it on wide m4"><svg class="i"><use href="#perp"/></svg>垂点</span>
        <span class="it on wide"><svg class="i"><use href="#mid"/></svg>中点</span>
        <span class="it m3"><svg class="i"><use href="#top"/></svg>顶点</span>
        <span class="it m6"><svg class="i"><use href="#coord"/></svg>坐标</span>
      </div>

      <section class="editor">
        <div class="dock">
          <svg class="dock-x" viewBox="0 0 12 12"><rect x="1" y="1" width="10" height="10" fill="#e8e8e8" stroke="#666"/><path d="M3 3l6 6M9 3l-6 6" stroke="#a03030"/></svg>
        </div>
        <div class="editor-main">
          <div class="tb tb-grid">
            <svg class="nv m5" viewBox="0 0 12 12"><path d="M2 1h2v10H2zM11 1L5 6l6 5z" fill="#ccc"/></svg>
            <svg class="nv m13" viewBox="0 0 12 12"><path d="M9 1L3 6l6 5z" fill="#ccc"/></svg>
            <svg class="nv m11" viewBox="0 0 12 12"><path d="M3 1l7 5-7 5z" fill="#2c62c0"/></svg>
            <svg class="nv m13" viewBox="0 0 12 12"><path d="M1 1l7 5-7 5zM8 1h2.500v10H8z" fill="#2c62c0"/></svg>
            <i class="sep m7"></i>
            <svg class="nv m6" viewBox="0 0 12 12"><path d="M6 1l5 5H8v5H4V6H1z" fill="#ccc"/></svg>
            <svg class="nv m12" viewBox="0 0 12 12"><path d="M6 11l5-5H8V1H4v5H1z" fill="#2c62c0"/></svg>
            <i class="sep m10"></i>
            <span class="it off m3"><svg class="i"><use href="#ins"/></svg>插入</span>
            <span class="it off m6"><svg class="i"><use href="#rm"/></svg>删除</span>
            <span class="it m6"><svg class="i"><use href="#scale"/></svg>缩尺配筋</span>
            <span class="it m6"><svg class="i"><use href="#info"/></svg>钢筋信息</span>
            <span class="it m6"><svg class="i"><use href="#lib"/></svg>钢筋图库</span>
            <span class="it m6"><svg class="i"><use href="#other"/></svg>其他</span><i class="arr m4"></i>
            <span class="m8">关闭</span><i class="sep m8"></i>
            <span class="m6">单构件钢筋总重(kg) : 78.322</span>
          </div>
          <div class="sheet">
            <table class="rebar">
              <colgroup>
                <col class="c-h"><col class="c-no"><col class="c-d"><col class="c-g"><col class="c-f"><col class="c-shape"><col class="c-calc"><col class="c-desc"><col class="c-len"><col class="c-n"><col class="c-lap"><col class="c-loss"><col class="c-w"><col class="c-tw"><col class="c-last">
              </colgroup>
              <thead>
                <tr><th></th><th class="cur">筋号</th><th>直径(mm)</th><th>级别</th><th>图号</th><th>图形</th><th>计算公式</th><th>公式描述</th><th>长度(mm)</th><th>根数</th><th>搭接</th><th>损耗(%)</th><th>单重(kg)</th><th>总重(kg)</th><th class="clip">钢筋归类</th></tr>
              </thead>
              <tbody>
                <tr class="g">
                  <td class="rh active">1*</td><td class="focus divide">SLJ-1.1</td><td>12</td><td class="ctr"><svg class="grade" viewBox="0 0 12 12"><circle cx="6" cy="5.500" r="3.500" fill="none" stroke="#222"/><path d="M6 0v10M2 11h8" stroke="#222"/></svg></td><td>1</td>
                  <td class="shape"><span class="shape-n">2100</span><span class="shape-l"></span></td>
                  <td class="calc">1900+max(200/2,5*d)+max(20<br>0/2,5*d)</td><td>净长+设定锚固+设定锚固</td><td>2100</td><td>25</td><td>0</td><td>0</td><td>1.865</td><td>46.62</td><td>直筋</td>
                </tr>
                <tr class="g">
                  <td class="rh">2</td><td class="divide">SLJ-1.2</td><td>12</td><td class="ctr"><svg class="grade" viewBox="0 0 12 12"><circle cx="6" cy="5.500" r="3.500" fill="none" stroke="#222"/><path d="M6 0v10M2 11h8" stroke="#222"/></svg></td><td>1</td>
                  <td class="shape"><span class="shape-n">2100</span><span class="shape-l"></span></td>
                  <td class="calc">1900+max(200/2,5*d)+max(20<br>0/2,5*d)</td><td>净长+设定锚固+设定锚固</td><td>2100</td><td>17</td><td>0</td><td>0</td><td>1.865</td><td>31.702</td><td>直筋</td>
                </tr>
                <tr class="last">
                  <td class="rh">3</td><td class="divide"></td><td></td><td></td><td></td><td></td><td></td><td></td><td></td><td></td><td></td><td></td><td></td><td></td><td></td>
                </tr>
              </tbody>
            </table>
          </div>
          <div class="hscroll">
            <svg class="sc-btn h" viewBox="0 0 19 15"><path d="M12 3L7 7.500l5 4.500" fill="none" stroke="#555" stroke-width="2"/></svg>
            <div class="hthumb"></div>
            <svg class="sc-btn h" viewBox="0 0 19 15"><path d="M7 3l5 4.500L7 12" fill="none" stroke="#555" stroke-width="2"/></svg>
          </div>
        </div>
      </section>
    </main>
  </div>

  <div class="float-strip">
    <svg class="strip-art" viewBox="0 0 204 9"><path d="M0 0h24c-1 4-5 7-12 7-6 0-10-3-12-7z" fill="#e8501c"/><circle cx="37" cy="0" r="3" fill="#3a78c8"/><circle cx="55" cy="0" r="4" fill="#3a78c8"/><circle cx="80" cy="0" r="2" fill="#555"/><path d="M90 0h8l-2 4h-4zM92 5h4" fill="#3a88a8" stroke="#3a88a8"/><rect x="110" y="0" width="14" height="3" fill="none" stroke="#3a78a8"/><rect x="130" y="0" width="12" height="4" fill="#bbb"/><circle cx="152" cy="0" r="4" fill="#2c62a8"/><circle cx="170" cy="0" r="3" fill="#2c62a8"/></svg>
  </div>
  <div class="poi">
    <div class="poi-top"><span>Poi...</span><i class="poi-x"></i></div>
    <div class="poi-btn">开始</div>
  </div>
</div>
</body>
</html>
```

FILE: styles.css
```css
* { box-sizing: border-box; }
html, body { margin: 0; padding: 0; }
body { background: #f0f0f0; overflow: hidden; }
.defs { position: absolute; width: 0; height: 0; }

.app {
  position: relative;
  width: 1365px;
  height: 689px;
  overflow: hidden;
  display: flex;
  flex-direction: column;
  background: #f0f0f0;
  color: #222;
  font: 12px/16px "Noto Sans CJK SC", "Liberation Sans", sans-serif;
}

.topstrip { height: 5px; flex: none; background: #fff; }

.menubar {
  height: 28px;
  flex: none;
  display: flex;
  align-items: center;
  padding-left: 7px;
  white-space: nowrap;
}
.news { color: #0b7a8e; margin: 0 37px 0 34px; }
.phone { letter-spacing: .25px; }

/* toolbars */
.tb { display: flex; align-items: center; white-space: nowrap; flex: none; }
.tb-main { height: 32px; padding-left: 4px; background: linear-gradient(#fafafa, #f4f4f4); }
.tb-edit { height: 26px; padding-left: 5px; background: linear-gradient(90deg, #fbfbfb 0, #fbfbfb 792px, #f0f0f0 793px); }
.tb-prop { height: 26px; margin-top: 2px; padding-left: 5px; background: linear-gradient(90deg, #fbfbfb 0, #fbfbfb 1060px, #f0f0f0 1061px); }
.tb-draw { height: 27px; margin-top: 3px; margin-bottom: 1px; padding-left: 5px; background: #f8f8f8; }
.tb-snap { height: 28px; padding-left: 5px; background: #f0f0f0; }
.tb-grid { height: 25px; padding-bottom: 1px; background: linear-gradient(#fff, #f2f2f2); }

.it { display: inline-flex; align-items: center; gap: 5px; }
.it.off { color: #a8a8a8; }
.it.on {
  height: 24px;
  padding: 0 3px 0 0;
  border: 1px solid #3b87bd;
  background: #e2f0fa;
}
.it.wide { padding-left: 1px; }
.i { width: 16px; height: 16px; flex: none; display: block; }
.nv { width: 12px; height: 12px; flex: none; }
.arr {
  display: inline-block;
  flex: none;
  width: 0;
  height: 0;
  border-left: 2.500px solid transparent;
  border-right: 2.500px solid transparent;
  border-top: 3px solid #222;
}
.arr.dim { border-top-color: #999; }
.sep { display: inline-block; flex: none; width: 1px; height: 20px; background: #c4c4c4; }
.more { width: 8px; flex: none; font: 700 13px/12px "Liberation Sans", sans-serif; margin-top: -8px; color: #222; }
.grip {
  display: inline-block;
  flex: none;
  width: 3px;
  height: 20px;
  background: repeating-linear-gradient(#b8b8b8 0 1px, transparent 1px 3px);
}

.sel-box {
  display: inline-flex;
  align-items: center;
  justify-content: space-between;
  height: 24px;
  padding: 0 3px 0 2px;
  background: #fff;
}
.w57 { width: 57px; }
.w69 { width: 69px; }
.combo {
  display: inline-flex;
  align-items: center;
  justify-content: flex-end;
  width: 56px;
  height: 23px;
  padding-right: 4px;
  background: #f4f4f4;
  border: 1px solid #999;
}

.m1 { margin-left: 1px; } .m2 { margin-left: 2px; } .m3 { margin-left: 3px; }
.m4 { margin-left: 4px; } .m5 { margin-left: 5px; } .m6 { margin-left: 6px; }
.m7 { margin-left: 7px; } .m8 { margin-left: 8px; } .m9 { margin-left: 9px; }
.m10 { margin-left: 10px; } .m11 { margin-left: 11px; } .m12 { margin-left: 12px; }
.m13 { margin-left: 13px; } .m14 { margin-left: 14px; } .m18 { margin-left: 18px; }
.m20 { margin-left: 20px; } .m28 { margin-left: 28px; } .m34 { margin-left: 34px; }
.m38 { margin-left: 38px; } .m45 { margin-left: 45px; }

/* main */
.work { flex: 1; min-height: 0; display: flex; }
.side { width: 236px; flex: none; display: flex; flex-direction: column; padding: 1px 0 2px; }
.content { width: 1125px; margin-left: 4px; flex: none; display: flex; flex-direction: column; min-height: 0; }

.side-head {
  height: 15px;
  flex: none;
  display: flex;
  justify-content: space-between;
  align-items: center;
  background: #0b5fd9;
  color: #fff;
  font-size: 12.600px;
  line-height: 15px;
  white-space: nowrap;
}
.side-ctl { display: flex; gap: 9px; padding-right: 4px; }
.pin { width: 9px; height: 9px; display: block; }
.side-btn {
  height: 22px;
  flex: none;
  margin-left: 1px;
  border: 1px solid #a8a8a8;
  background: #f0f0f0;
  text-align: center;
  line-height: 20px;
}
.side-btn:nth-of-type(2) { margin-top: 1px; }
.side-tools {
  height: 27px;
  flex: none;
  margin-left: 2px;
  padding: 8px 0 0 5px;
  display: flex;
  gap: 8px;
  background: #fff;
  border-bottom: 1px solid #a8a8a8;
}
.exp { width: 16px; height: 14px; display: block; }

.tree-wrap {
  flex: 1;
  min-height: 0;
  display: flex;
  margin-left: 2px;
  border-left: 1px solid #a0a0a0;
  border-right: 1px solid #a0a0a0;
  border-bottom: 2px solid #a0a0a0;
  background: #fff;
  padding-right: 2px;
}
.tree {
  flex: 1;
  min-width: 0;
  overflow: hidden;
  padding-top: 3px;
  font-family: "Noto Sans Mono CJK SC", "Noto Sans CJK SC", monospace;
  background: repeating-linear-gradient(#888 0 1px, transparent 1px 3px) 12px 0 / 1px 100% no-repeat;
}
.kids { background: repeating-linear-gradient(#888 0 1px, transparent 1px 3px) 32px 0 / 1px calc(100% - 8px) no-repeat; }
.row { height: 16px; display: flex; align-items: center; padding-left: 33px; white-space: nowrap; }
.row.fold { padding-left: 8px; }
.tick { width: 10px; flex: none; border-top: 1px dotted #777; }
.tick.short { width: 7px; margin-left: 1px; }
.chev {
  flex: none;
  width: 8px;
  height: 8px;
  background: #fff;
  position: relative;
}
.chev::after {
  content: "";
  position: absolute;
  left: 1px;
  top: -1px;
  width: 5px;
  height: 5px;
  border-right: 2px solid #555;
  border-bottom: 2px solid #555;
  transform: rotate(45deg);
}
.lb { margin-left: 4px; }
.fold .lb { margin-left: 5px; }
.sel { display: inline-flex; align-items: center; background: #dcdcdc; height: 16px; padding-right: 2px; }

.vscroll { width: 15px; flex: none; display: flex; flex-direction: column; background: #f0f0f0; }
.sc-btn { width: 15px; height: 15px; flex: none; display: block; margin: 3px 0; }
.sc-btn.h { width: 19px; margin: 0; }
.vtrack { flex: 1; min-height: 0; padding-top: 110px; padding-bottom: 123px; display: flex; }
.vthumb { flex: 1; background: #cdcdcd; }

.side-btn.foot { margin-top: 1px; margin-bottom: 1px; height: 21px; line-height: 19px; }
.side-btn.foot2 { height: 22px; }

.cad { width: 1124px; height: 152px; margin-left: 1px; flex: none; display: block; }
.cad-num { fill: #c8c8c8; font: 15px "Liberation Sans", sans-serif; text-anchor: middle; }
.cad-dim { fill: #c8c8c8; font: 15px "Liberation Sans", sans-serif; letter-spacing: .5px; }
.cad-tiny { fill: #777; font: 5px "Liberation Sans", sans-serif; }
.cad-y { fill: #18c018; font: 13px "Liberation Sans", sans-serif; }
.cad-x { fill: #d01010; font: 13px "Liberation Sans", sans-serif; }

.editor { margin-top: 5px; flex: 1; min-height: 0; display: flex; }
.dock {
  width: 13px;
  flex: none;
  padding: 0 0 0 2px;
  background: repeating-linear-gradient(#f0f0f0 0 2px, #d4d4d4 2px 3px, #f0f0f0 3px 4px);
}
.dock-x { width: 11px; height: 11px; display: block; background: #f0f0f0; }
.editor-main { width: 1112px; flex: none; display: flex; flex-direction: column; min-height: 0; padding-bottom: 1px; }
.sheet {
  flex: 1;
  min-height: 0;
  background: #fff;
  border-left: 1px solid #a8a8a8;
  border-top: 1px solid #a8a8a8;
  overflow: hidden;
}
.rebar {
  table-layout: fixed;
  border-collapse: collapse;
  width: 1111px;
  font-family: "Noto Sans Mono CJK SC", "Noto Sans CJK SC", monospace;
  line-height: 14px;
}
.c-h { width: 33px; } .c-no { width: 73px; } .c-d { width: 56px; } .c-g { width: 36px; }
.c-f { width: 33px; } .c-shape { width: 201px; } .c-calc { width: 166px; } .c-desc { width: 156px; }
.c-len { width: 61px; } .c-n { width: 38px; } .c-lap { width: 39px; } .c-loss { width: 49px; }
.c-w { width: 62px; } .c-tw { width: 61px; } .c-last { width: 47px; }
.rebar th {
  height: 20px;
  padding: 0;
  font-weight: 400;
  text-align: center;
  overflow: hidden;
  white-space: nowrap;
  background: linear-gradient(#fbfbfb, #ececec);
  border-right: 1px solid #cfcfcf;
}
.rebar th.cur { background: linear-gradient(#f8d8a4, #f2bc72); color: #a4281c; }
.rebar th.clip { text-align: left; padding-left: 6px; border-right: 0; }
.rebar td {
  height: 28.500px;
  padding: 0 0 0 2px;
  border-right: 1px solid #c4c4c4;
  border-bottom: 1px solid #b8b8b8;
  white-space: nowrap;
  overflow: hidden;
}
.rebar tr.g td { background: #c8fcd0; }
.rebar tr.last td { height: 19px; background: #fff; }
.rebar tr.g td.rh, .rebar tr.last td.rh { background: #f6f6f6; text-align: center; padding: 0; color: #333; }
.rebar tr.g td.rh.active { background: #fbd08c; color: #7a4a1a; }
.rebar tr.g td.focus { background: #aae6d6; }
.rebar td.divide { border-right: 2px solid #111; }
.rebar td.ctr { text-align: center; padding: 0; }
.rebar td.calc { font-size: 12px; line-height: 13px; padding-left: 1px; }
.rebar td:last-child { border-right: 0; padding-left: 6px; }
.grade { width: 12px; height: 12px; display: inline-block; vertical-align: middle; }
.shape { text-align: center; }
.rebar td.shape { padding: 0; }
.shape-n { display: block; color: #c02020; font: 11px/13px "Liberation Sans", sans-serif; margin-top: 1px; }
.shape-l { display: block; width: 150px; height: 2px; margin: 3px auto 0; background: #111; }

.hscroll {
  height: 18px;
  flex: none;
  display: flex;
  align-items: flex-start;
  border-left: 1px solid #a8a8a8;
  border-bottom: 1px solid #a8a8a8;
  border-right: 1px solid #a8a8a8;
  background: linear-gradient(#efefef 0, #efefef 15px, #fff 15px);
}
.hthumb { width: 930px; height: 15px; background: #cbcbcb; margin-right: auto; }

/* overlays: floating windows over the app */
.float-strip {
  position: absolute;
  left: 765px;
  top: 0;
  width: 204px;
  height: 9px;
  background: #fff;
  border-bottom: 1px solid #b8c0c8;
  border-right: 1px solid #d4d8dc;
}
.strip-art { display: block; width: 204px; height: 8px; }
.poi {
  position: absolute;
  left: 1127px;
  top: 82px;
  width: 52px;
  height: 50px;
  background: #fff;
  box-shadow: 0 0 4px rgba(0, 0, 0, .25);
}
.poi-top { height: 27px; display: flex; padding: 3px 1px 0 3px; color: #b4b4b4; }
.poi-top span { line-height: 20px; font-family: "Liberation Sans", sans-serif; font-size: 12px; }
.poi-x { margin-left: auto; width: 20px; height: 19px; background: #e0e0e0; }
.poi-btn {
  height: 22px;
  text-align: center;
  line-height: 19px;
  background: #f0f0f0;
  border: 1px solid #777;
  border-right-width: 2px;
  border-bottom-width: 2px;
}
```
